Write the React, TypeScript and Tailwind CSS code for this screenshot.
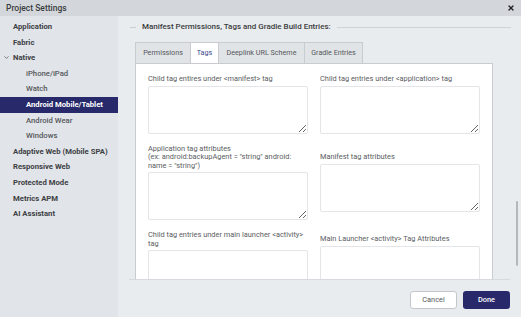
import { ChevronDown, X } from 'lucide-react'

const navItems: { label: string; sub?: boolean; active?: boolean; chevron?: boolean }[] = [
  { label: 'Application' },
  { label: 'Fabric' },
  { label: 'Native', chevron: true },
  { label: 'iPhone/iPad', sub: true },
  { label: 'Watch', sub: true },
  { label: 'Android Mobile/Tablet', sub: true, active: true },
  { label: 'Android Wear', sub: true },
  { label: 'Windows', sub: true },
  { label: 'Adaptive Web (Mobile SPA)' },
  { label: 'Responsive Web' },
  { label: 'Protected Mode' },
  { label: 'Metrics APM' },
  { label: 'AI Assistant' },
]

const tabs = [
  { label: 'Permissions', w: 'w-[55px]' },
  { label: 'Tags', w: 'w-[28px]' },
  { label: 'Deeplink URL Scheme', w: 'w-[86px]' },
  { label: 'Gradle Entries', w: 'w-[59px]' },
]

function Field({ label, className = '' }: { label: React.ReactNode; className?: string }) {
  return (
    <div className={`flex flex-col gap-[2px] ${className}`}>
      <label className="text-[7.4px] leading-[8.5px] text-[#5a5d62]">{label}</label>
      <textarea className="h-[48px] w-full rounded-[2px] border border-[#e3e5e8] bg-white outline-none" />
    </div>
  )
}

export default function App() {
  return (
    <div className="flex h-[317px] w-[521px] flex-col overflow-hidden bg-[#e9ecef] font-['Roboto',sans-serif]">
      <div className="flex h-[16px] shrink-0 items-center justify-between bg-[#d3d7dc] pl-[6px] pr-[6px]">
        <span className="text-[8.5px] font-medium text-[#3b3d40]">Project Settings</span>
        <X size={8} strokeWidth={4} className="text-[#222]" />
      </div>
      <div className="flex min-h-0 flex-1">
        <nav className="flex w-[118px] shrink-0 flex-col bg-[#e1e4e8] pt-[3px]">
          {navItems.map((item) => (
            <div
              key={item.label}
              className={`relative flex h-[15.6px] items-center text-[7.7px] ${
                item.sub ? 'pl-[26px]' : 'pl-[13px]'
              } ${
                item.active
                  ? 'bg-[#27296b] font-bold text-white'
                  : item.sub
                    ? 'font-medium text-[#55585c]'
                    : 'font-bold text-[#3d4044]'
              }`}
            >
              {item.chevron && (
                <ChevronDown size={7} strokeWidth={2.5} className="absolute left-[3px] text-[#55585c]" />
              )}
              {item.label}
            </div>
          ))}
        </nav>
        <div className="relative flex min-w-0 flex-1 flex-col">
          <div className="min-h-0 flex-1 overflow-hidden">
            <div className="flex items-center gap-[6px] pl-[12px] pr-[10px] pt-[5px]">
              <div className="h-px w-[6px] bg-[#c9ccd1]" />
              <span className="text-[8px] font-medium text-[#3a3c40]">
                Manifest Permissions, Tags and Gradle Build Entries:
              </span>
              <div className="h-px flex-1 bg-[#cfd2d6]" />
            </div>
            <div className="ml-[17px] mt-[9px] w-[358px]">
              <div className="flex">
                {tabs.map((t) => (
                  <div
                    key={t.label}
                    className={`flex h-[21px] shrink-0 items-center justify-center whitespace-nowrap border-l border-t border-[#c8ccd1] text-[7.2px] last:border-r ${t.w} ${
                      t.label === 'Tags'
                        ? 'relative z-10 -mb-px bg-white text-[#3b4a8a]'
                        : 'bg-[#e1e4e7] text-[#55585c]'
                    }`}
                  >
                    {t.label}
                  </div>
                ))}
              </div>
              <div className="grid grid-cols-2 items-center gap-x-[12px] gap-y-[11px] border border-[#c8ccd1] bg-white px-[12px] pb-[20px] pt-[11px]">
                <Field label="Child tag entires under <manifest> tag" />
                <Field label="Child tag entries under <application> tag" />
                <Field
                  label={
                    <>
                      Application tag attributes
                      <br />
                      (ex: android:backupAgent = "string" android:
                      <br />
                      name = "string")
                    </>
                  }
                />
                <Field label="Manifest tag attributes" />
                <Field
                  label={
                    <>
                      Child tag entries under main launcher &lt;activity&gt;
                      <br />
                      tag
                    </>
                  }
                />
                <Field label="Main Launcher <activity> Tag Attributes" />
              </div>
            </div>
          </div>
          <div className="absolute right-[3px] top-[185px] h-[65px] w-[2px] rounded-full bg-[#b4b7bb]" />
          <div className="mx-[11px] h-[38px] shrink-0 border-t border-[#d6d9dd]">
            <div className="flex justify-end gap-[6px] pt-[11px]">
              <button className="h-[18px] w-[47px] rounded-[3px] border border-[#c3c7cc] bg-white text-[7.4px] text-[#55585c]">
                Cancel
              </button>
              <button className="h-[18px] w-[47px] rounded-[3px] bg-[#27296b] text-[7.4px] font-medium text-white">
                Done
              </button>
            </div>
          </div>
        </div>
      </div>
    </div>
  )
}
